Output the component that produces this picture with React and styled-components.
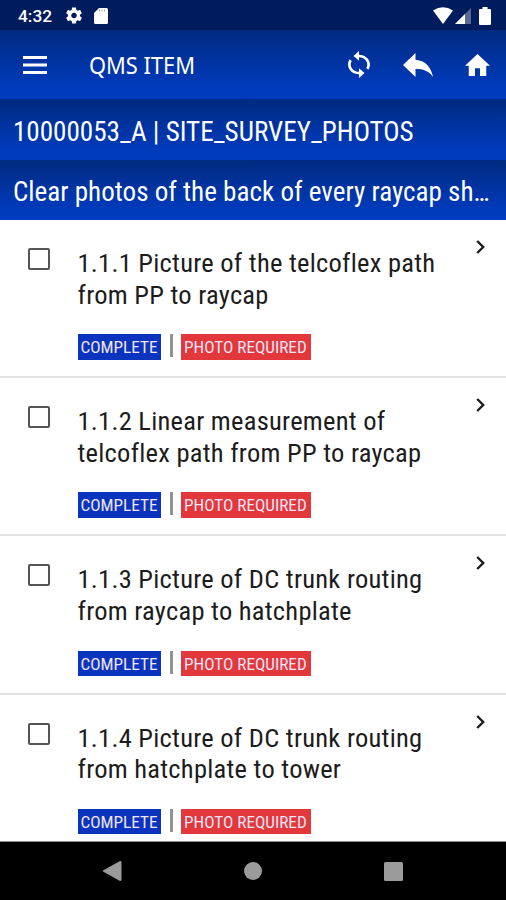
import styled, { createGlobalStyle } from "styled-components";
import { useState } from "react";

const GlobalStyle = createGlobalStyle`
  * {
    box-sizing: border-box;
  }
  body {
    margin: 0;
    background: #fff;
    font-family: "Roboto Condensed", Roboto, sans-serif;
    font-stretch: 75%;
  }
`;

const Screen = styled.div`
  width: 100%;
  height: 900px;
  display: flex;
  flex-direction: column;
  overflow: hidden;
`;

const StatusBar = styled.div`
  flex: none;
  height: 30px;
  padding: 1px 15px 0 18px;
  display: flex;
  align-items: center;
  background: #001c5c;
  color: #fff;
`;

const Clock = styled.span`
  width: 48px;
  font-family: Roboto, sans-serif;
  font-stretch: 100%;
  font-size: 17.3px;
  font-weight: 500;
`;

const StatusIcon = styled.svg`
  display: block;
  flex: none;
  margin-left: ${(props) => props.$left || "0"};
`;

const AppBar = styled.header`
  flex: none;
  height: 69px;
  padding: 0 16px 0 23px;
  display: flex;
  align-items: center;
  background: linear-gradient(#002a80, #003bbd 85%);
  color: #fff;
`;

const IconButton = styled.button`
  flex: none;
  display: flex;
  padding: 0;
  margin-left: ${(props) => props.$left || "0"};
  background: none;
  border: none;
  color: inherit;
  cursor: pointer;
`;

const PageTitle = styled.h1`
  flex: 1;
  margin: 0 0 0 42px;
  font-family: "Noto Sans", sans-serif;
  font-stretch: 100%;
  font-size: 24px;
  font-weight: 400;
  white-space: nowrap;
`;

const TitleText = styled.span`
  display: inline-block;
  transform: scaleX(0.91);
  transform-origin: left center;
`;

const SubHeader = styled.div`
  flex: none;
  height: ${(props) => props.$height};
  padding: 0 13px;
  background: linear-gradient(#002a80, #003bbd 85%);
  color: #fff;
  font-size: 27.1px;
  line-height: ${(props) => props.$line};
`;

const List = styled.ul`
  flex: 1;
  min-height: 0;
  margin: 0;
  padding: 0;
  list-style: none;
  overflow: hidden;
  border-bottom: 1px solid #8b8f8e;
`;

const Row = styled.li`
  height: 158.2px;
  padding: 27px 21px 0 28px;
  display: flex;
  align-items: flex-start;
  border-bottom: 2px solid #e3e3e3;
`;

const Checkbox = styled.button`
  flex: none;
  width: 22px;
  height: 22px;
  margin-top: 1px;
  padding: 0;
  border: 2px solid #555;
  border-radius: 2px;
  background: ${(props) => (props.$checked ? "#0a34bd" : "#fff")};
  cursor: pointer;
`;

const RowBody = styled.div`
  flex: 1;
  min-width: 0;
  margin-left: 27.5px;
`;

const RowTitle = styled.div`
  color: #1c1c1c;
  font-size: 26.5px;
  line-height: 31.6px;
  letter-spacing: 0.25px;
`;

const Line = styled.div`
  white-space: nowrap;
`;

const Badges = styled.div`
  margin-top: 24px;
  display: flex;
  align-items: flex-start;
`;

const Badge = styled.span`
  width: ${(props) => props.$width};
  height: 25.5px;
  padding-left: 3px;
  background: ${(props) => props.$color};
  color: #f0e4f6;
  font-size: 17.2px;
  line-height: 27px;
  white-space: nowrap;
`;

const Divider = styled.span`
  width: 3px;
  height: 23px;
  margin: 0 8px 0 9px;
  background: #929292;
`;

const Chevron = styled.svg`
  display: block;
  margin-top: -7px;
`;

const NavBar = styled.nav`
  flex: none;
  height: 58px;
  padding: 0 103px 0 102px;
  display: flex;
  align-items: center;
  justify-content: space-between;
  background: #000;
`;

const items = [
  ["1.1.1 Picture of the telcoflex path", "from PP to raycap"],
  ["1.1.2 Linear measurement of", "telcoflex path from PP to raycap"],
  ["1.1.3 Picture of DC trunk routing", "from raycap to hatchplate"],
  ["1.1.4 Picture of DC trunk routing", "from hatchplate to tower"],
];

function Item({ lines }) {
  const [checked, setChecked] = useState(false);

  return (
    <Row>
      <Checkbox $checked={checked} onClick={() => setChecked(!checked)} />
      <RowBody>
        <RowTitle>
          {lines.map((line) => (
            <Line key={line}>{line}</Line>
          ))}
        </RowTitle>
        <Badges>
          <Badge $width="83.5px" $color="#0a34bd">
            COMPLETE
          </Badge>
          <Divider />
          <Badge $width="130px" $color="#e2373b">
            PHOTO REQUIRED
          </Badge>
        </Badges>
      </RowBody>
      <IconButton>
        <Chevron width="9" height="14" viewBox="0 0 9 14" fill="none" stroke="#1c1c1c" strokeWidth="2.4">
          <path d="M1.2 1l6 6-6 6" />
        </Chevron>
      </IconButton>
    </Row>
  );
}

function App() {
  return (
    <Screen>
      <GlobalStyle />
      <StatusBar>
        <Clock>4:32</Clock>
        <StatusIcon width="16" height="17" viewBox="2 2 20 20" fill="currentColor">
          <path d="M19.43 12.98c.04-.32.07-.64.07-.98s-.03-.66-.07-.98l2.11-1.65c.19-.15.24-.42.12-.64l-2-3.46c-.12-.22-.39-.3-.61-.22l-2.49 1c-.52-.4-1.08-.73-1.69-.98l-.38-2.65C14.46 2.18 14.25 2 14 2h-4c-.25 0-.46.18-.49.42l-.38 2.65c-.61.25-1.17.59-1.69.98l-2.49-1c-.23-.09-.49 0-.61.22l-2 3.46c-.13.22-.07.49.12.64l2.11 1.65c-.04.32-.07.65-.07.98s.03.66.07.98l-2.11 1.65c-.19.15-.24.42-.12.64l2 3.46c.12.22.39.3.61.22l2.49-1c.52.4 1.08.73 1.69.98l.38 2.65c.03.24.24.42.49.42h4c.25 0 .46-.18.49-.42l.38-2.65c.61-.25 1.17-.59 1.69-.98l2.49 1c.23.09.49 0 .61-.22l2-3.46c.12-.22.07-.49-.12-.64l-2.11-1.65zM12 15.5c-1.93 0-3.5-1.57-3.5-3.5s1.57-3.5 3.5-3.5 3.5 1.57 3.5 3.5-1.57 3.5-3.5 3.5z" />
        </StatusIcon>
        <StatusIcon $left="12px" width="14" height="16" viewBox="0 0 14 16">
          <path fill="#fff" d="M5 0h7.5Q14 0 14 1.5v13Q14 16 12.5 16h-11Q0 16 0 14.5V5z" />
          <path stroke="#001c5c" strokeOpacity=".4" d="M5.5 1.5v2M8 1.5v2M10.5 1.5v2" />
        </StatusIcon>
        <StatusIcon $left="auto" width="20" height="17" viewBox="0 0 20 17" fill="#fff">
          <path d="M0 3.5Q10-3 20 3.5L10 17z" />
        </StatusIcon>
        <StatusIcon $left="2px" width="16" height="16" viewBox="0 0 16 16">
          <path fill="#fff" fillOpacity=".35" d="M16 0v16H0z" />
          <path fill="#fff" d="M10 6v10H0z" />
        </StatusIcon>
        <StatusIcon $left="8px" width="12" height="18" viewBox="0 0 12 18" fill="#fff">
          <path d="M3.5 0h5v2H11q1 0 1 1v14q0 1-1 1H1q-1 0-1-1V3q0-1 1-1h2.5z" />
        </StatusIcon>
      </StatusBar>
      <AppBar>
        <IconButton>
          <svg width="24" height="18" viewBox="0 0 24 18" fill="currentColor">
            <path d="M0 0h24v3H0zM0 7.5h24v3H0zM0 15h24v3H0z" />
          </svg>
        </IconButton>
        <PageTitle>
          <TitleText>QMS ITEM</TitleText>
        </PageTitle>
        <IconButton>
          <svg width="22" height="27" viewBox="4 1 16 22" preserveAspectRatio="none" fill="currentColor">
            <path d="M12 4V1L8 5l4 4V6c3.31 0 6 2.69 6 6 0 1.01-.25 1.97-.7 2.8l1.46 1.46C19.54 15.03 20 13.57 20 12c0-4.42-3.58-8-8-8zm0 14c-3.31 0-6-2.69-6-6 0-1.01.25-1.97.7-2.8L5.24 7.74C4.46 8.97 4 10.43 4 12c0 4.42 3.58 8 8 8v3l4-4-4-4v3z" />
          </svg>
        </IconButton>
        <IconButton $left="33px">
          <svg width="30" height="24" viewBox="3 5 18 14" preserveAspectRatio="none" fill="currentColor">
            <path d="M10.5 9V5L3 12l7.5 7v-4.6c4.5 0 8 1 10.5 4.6-1-5-4-9.5-10.5-10z" />
          </svg>
        </IconButton>
        <IconButton $left="32px">
          <svg width="25" height="22" viewBox="2 3 20 17" preserveAspectRatio="none" fill="currentColor">
            <path d="M10 20v-6h4v6h5v-8h3L12 3 2 12h3v8z" />
          </svg>
        </IconButton>
      </AppBar>
      <SubHeader $height="61px" $line="66px">
        10000053_A | SITE_SURVEY_PHOTOS
      </SubHeader>
      <SubHeader $height="60px" $line="65px">
        Clear photos of the back of every raycap sh…
      </SubHeader>
      <List>
        {items.map((lines) => (
          <Item key={lines[0]} lines={lines} />
        ))}
      </List>
      <NavBar>
        <svg width="20" height="20" viewBox="0 0 20 20" fill="#9b9b9b">
          <path d="M1 9.5L18 0q1.5 0 1.5 1.2v17.6q0 1.2-1.5 1.2L1 10.5q-1-.5 0-1z" />
        </svg>
        <svg width="18" height="18" viewBox="0 0 18 18" fill="#9b9b9b">
          <circle cx="9" cy="9" r="9" />
        </svg>
        <svg width="19" height="19" viewBox="0 0 19 19" fill="#9b9b9b">
          <rect width="19" height="19" rx="1.5" />
        </svg>
      </NavBar>
    </Screen>
  );
}

export default App;
